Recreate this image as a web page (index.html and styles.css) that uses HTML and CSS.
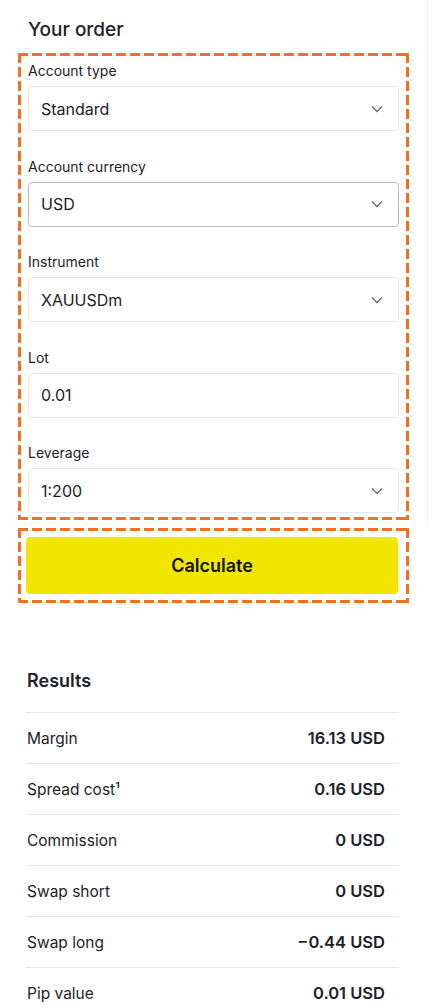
FILE: index.html
```html
<!DOCTYPE html>
<html lang="en">
<head>
    <meta charset="UTF-8">
    <meta name="viewport" content="width=device-width, initial-scale=1.0">
    <title>Margin calculator</title>
    <link rel="stylesheet" href="styles.css">
</head>
<body>
    <div class="calc">
        <div class="order">
            <h2 class="title">Your order</h2>
            <div class="outline fields">
                <div class="field">
                    <label>Account type</label>
                    <div class="select">
                        <span>Standard</span>
                        <svg class="chev" width="12" height="8" viewBox="0 0 12 8"><path d="M1 1.5l5 5 5-5" fill="none" stroke="#6c7077" stroke-width="1.5"/></svg>
                    </div>
                </div>
                <div class="field">
                    <label>Account currency</label>
                    <div class="select active">
                        <span>USD</span>
                        <svg class="chev" width="12" height="8" viewBox="0 0 12 8"><path d="M1 1.5l5 5 5-5" fill="none" stroke="#6c7077" stroke-width="1.5"/></svg>
                    </div>
                </div>
                <div class="field">
                    <label>Instrument</label>
                    <div class="select">
                        <span>XAUUSDm</span>
                        <svg class="chev" width="12" height="8" viewBox="0 0 12 8"><path d="M1 1.5l5 5 5-5" fill="none" stroke="#6c7077" stroke-width="1.5"/></svg>
                    </div>
                </div>
                <div class="field">
                    <label>Lot</label>
                    <div class="select">
                        <span>0.01</span>
                    </div>
                </div>
                <div class="field">
                    <label>Leverage</label>
                    <div class="select">
                        <span>1:200</span>
                        <svg class="chev" width="12" height="8" viewBox="0 0 12 8"><path d="M1 1.5l5 5 5-5" fill="none" stroke="#6c7077" stroke-width="1.5"/></svg>
                    </div>
                </div>
            </div>
        </div>
        <div class="outline action">
            <button class="btn">Calculate</button>
        </div>
        <div class="results">
            <h2 class="res-title">Results</h2>
            <div class="row"><span>Margin</span><b>16.13 USD</b></div>
            <div class="row"><span>Spread cost¹</span><b>0.16 USD</b></div>
            <div class="row"><span>Commission</span><b>0 USD</b></div>
            <div class="row"><span>Swap short</span><b>0 USD</b></div>
            <div class="row"><span>Swap long</span><b>−0.44 USD</b></div>
            <div class="row"><span>Pip value</span><b>0.01 USD</b></div>
        </div>
    </div>
</body>
</html>
```
FILE: styles.css
```css
body{
    margin: 0;
    background: #fff;
    font-family: Inter, "Liberation Sans", sans-serif;
    color: #1b2229;
}
.calc{
    width: 428px;
}
.order{
    padding: 18px 0 4px 18px;
    border-right: 1px solid #ececec;
}
.title{
    margin: 0 0 11px 10px;
    font-size: 19px;
    line-height: 24px;
    font-weight: 500;
}
/* dashed frame, longer dashes than the browser's own */
.outline{
    width: 391px;
    box-sizing: border-box;
    border: 3px solid transparent;
    background:
        repeating-linear-gradient(90deg, #f07024 0 10px, transparent 10px 14px) left top / 100% 3px no-repeat,
        repeating-linear-gradient(90deg, #f07024 0 10px, transparent 10px 14px) left bottom / 100% 3px no-repeat,
        repeating-linear-gradient(180deg, #f07024 0 10px, transparent 10px 14px) left top / 3px 100% no-repeat,
        repeating-linear-gradient(180deg, #f07024 0 10px, transparent 10px 14px) right top / 3px 100% no-repeat;
    background-origin: border-box;
}
.fields{
    padding: 5px 7px 4px 7px;
    display: flex;
    flex-direction: column;
    gap: 25.5px;
}
.field label{
    display: block;
    font-size: 14px;
    line-height: 20px;
    margin-bottom: 5px;
}
.select{
    height: 45px;
    box-sizing: border-box;
    border: 1px solid #e6e8ea;
    border-radius: 4px;
    padding: 0 15px 0 12px;
    display: flex;
    align-items: center;
    justify-content: space-between;
    font-size: 16px;
    background: #fff;
}
.select.active{
    border-color: #b7bdc5;
}
.action{
    margin: 4px 0 0 18px;
    padding: 6px 8px 6px 5px;
}
.btn{
    display: block;
    width: 100%;
    height: 57px;
    border: none;
    border-radius: 4px;
    background: #f1e600;
    font-family: Inter, "Liberation Sans", sans-serif;
    font-size: 18px;
    font-weight: 600;
    color: #111;
}
.results{
    padding: 0 29px 0 26px;
}
.res-title{
    margin: 66px 0 19px 1px;
    font-size: 18px;
    line-height: 24px;
    font-weight: 600;
}
.row{
    height: 51px;
    box-sizing: border-box;
    border-top: 1px solid #e6e6e6;
    display: flex;
    align-items: center;
    justify-content: space-between;
    padding: 0 14px 0 1px;
    font-size: 15.5px;
}
.row b{
    font-size: 16.5px;
    font-weight: 600;
}
```
